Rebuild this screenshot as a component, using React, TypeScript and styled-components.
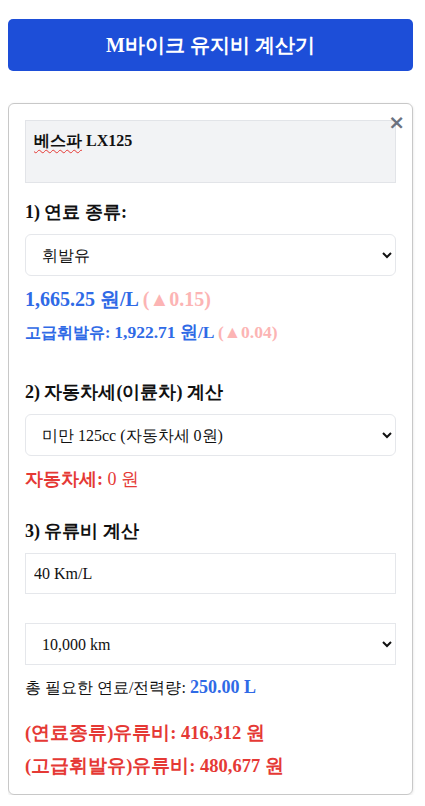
import React from "react";
import styled, { createGlobalStyle } from "styled-components";

const Global = createGlobalStyle`
  body {
    margin: 8px;
    font-family: "Liberation Serif", serif;
    color: #111;
    background: #fff;
  }
  * { box-sizing: border-box; }
`;

const Page = styled.div`
  display: flex;
  flex-direction: column;
  width: 405px;
  padding-top: 11px;
`;

const Header = styled.h1`
  margin: 0 0 32px;
  height: 52px;
  background: #1d4ed8;
  color: #fff;
  border-radius: 5px;
  display: flex;
  align-items: center;
  justify-content: center;
  font-size: 20px;
  font-weight: bold;
`;

const Card = styled.div`
  position: relative;
  border: 1px solid #c8c8c8;
  border-radius: 6px;
  box-shadow: 0 1px 3px rgba(0, 0, 0, 0.12);
  padding: 16px 16px 14px;
  display: flex;
  flex-direction: column;
`;

const CloseButton = styled.button`
  position: absolute;
  top: 8px;
  right: 7px;
  border: none;
  background: none;
  padding: 0;
  color: #6b7280;
  font-size: 20px;
  font-weight: bold;
  line-height: 1;
  font-family: "DejaVu Sans", sans-serif;
  cursor: pointer;
`;

const NameBox = styled.div`
  height: 63px;
  background: #f2f3f5;
  border: 1px solid #e2e4e8;
  padding: 9px 8px;
  font-size: 16px;
  font-weight: bold;
  line-height: 22px;
`;

const Misspelled = styled.span`
  text-decoration: underline wavy #e53935;
  text-decoration-thickness: 1px;
  text-underline-offset: 3px;
`;

const SectionTitle = styled.div<{ $top: number }>`
  margin: ${(p) => p.$top}px 0 8px;
  font-size: 18px;
  font-weight: bold;
  line-height: 27px;
`;

const Select = styled.select<{ $rounded?: boolean; $top?: number }>`
  height: 42px;
  width: 100%;
  margin-top: ${(p) => p.$top ?? 0}px;
  border: 1px solid #e5e7eb;
  border-radius: ${(p) => (p.$rounded ? "6px" : "0")};
  background: #fff;
  padding: 0 8px 0 12px;
  font-family: "Liberation Serif", serif;
  font-size: 16px;
  color: #111;
`;

const TextInput = styled.input`
  height: 41px;
  width: 100%;
  border: 1px solid #e5e7eb;
  padding: 0 8px;
  font-family: "Liberation Serif", serif;
  font-size: 16px;
  color: #111;
`;

const Line = styled.div<{ $size: number; $lh: number; $top: number; $color: string; $bold?: boolean }>`
  margin-top: ${(p) => p.$top}px;
  font-size: ${(p) => p.$size}px;
  line-height: ${(p) => p.$lh}px;
  color: ${(p) => p.$color};
  font-weight: ${(p) => (p.$bold ? "bold" : "normal")};
`;

const Value = styled.span<{ $size: number }>`
  font-size: ${(p) => p.$size}px;
`;

const Delta = styled.span`
  color: #fcb4b4;
`;

const Light = styled.span`
  font-weight: normal;
`;

const BlueBold = styled.span`
  color: #2f6ae6;
  font-weight: bold;
  font-size: 18px;
`;

export default function App() {
  return (
    <Page>
      <Global />
      <Header>M바이크 유지비 계산기</Header>
      <Card>
        <CloseButton aria-label="close">×</CloseButton>
        <NameBox>
          <Misspelled>베스파</Misspelled> LX125
        </NameBox>

        <SectionTitle $top={16}>1) 연료 종류:</SectionTitle>
        <Select $rounded defaultValue="gas">
          <option value="gas">휘발유</option>
          <option value="diesel">경유</option>
        </Select>
        <Line $size={20} $lh={27} $top={10} $color="#2f6ae6" $bold>
          1,665.25 원/L <Delta>(▲0.15)</Delta>
        </Line>
        <Line $size={16} $lh={24} $top={7} $color="#2f6ae6" $bold>
          고급휘발유:{" "}
          <Value $size={17.5}>
            1,922.71 원/L <Delta>(▲0.04)</Delta>
          </Value>
        </Line>

        <SectionTitle $top={34}>2) 자동차세(이륜차) 계산</SectionTitle>
        <Select $rounded defaultValue="lt125">
          <option value="lt125">미만 125cc (자동차세 0원)</option>
        </Select>
        <Line $size={18} $lh={27} $top={10} $color="#e53935" $bold>
          자동차세: <Light>0 원</Light>
        </Line>

        <SectionTitle $top={25}>3) 유류비 계산</SectionTitle>
        <TextInput defaultValue="40 Km/L" />
        <Select $top={29} defaultValue="10000">
          <option value="10000">10,000 km</option>
        </Select>
        <Line $size={16} $lh={24} $top={10} $color="#111">
          총 필요한 연료/전력량: <BlueBold>250.00 L</BlueBold>
        </Line>
        <Line $size={18.5} $lh={27} $top={20} $color="#e53935" $bold>
          (연료종류)유류비: 416,312 원
        </Line>
        <Line $size={18.5} $lh={27} $top={6} $color="#e53935" $bold>
          (고급휘발유)유류비: 480,677 원
        </Line>
      </Card>
    </Page>
  );
}
